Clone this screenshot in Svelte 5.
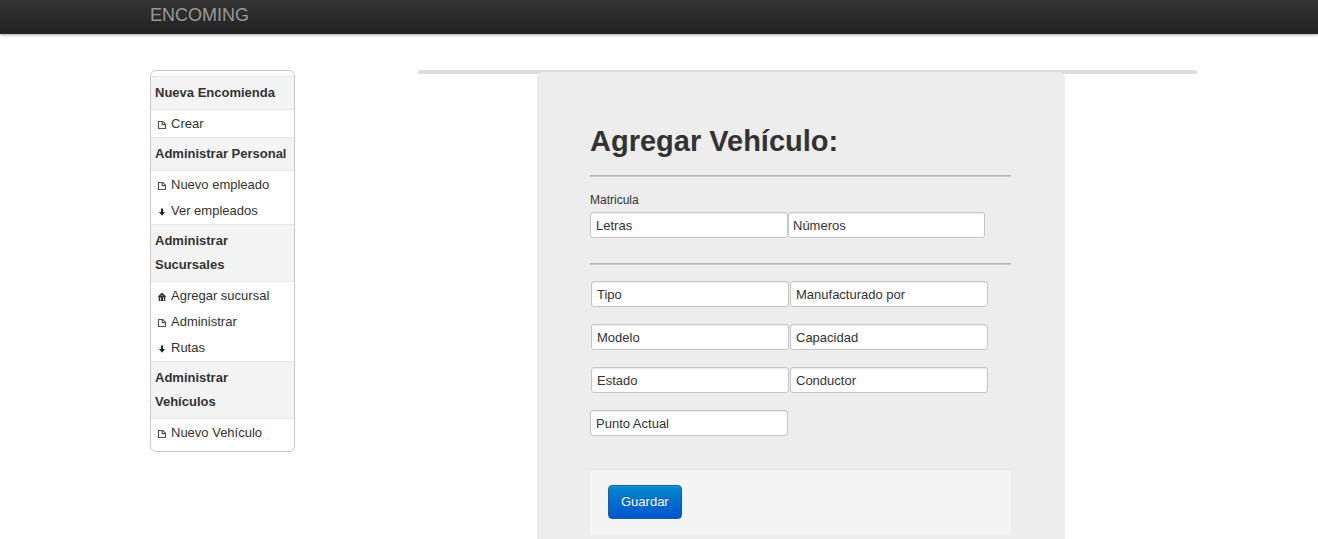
<script lang="ts">
  const sections = [
    { title: 'Nueva Encomienda', items: [{ icon: 'file', text: 'Crear' }] },
    {
      title: 'Administrar Personal',
      items: [
        { icon: 'file', text: 'Nuevo empleado' },
        { icon: 'arrow', text: 'Ver empleados' }
      ]
    },
    {
      title: 'Administrar Sucursales',
      items: [
        { icon: 'home', text: 'Agregar sucursal' },
        { icon: 'file', text: 'Administrar' },
        { icon: 'arrow', text: 'Rutas' }
      ]
    },
    { title: 'Administrar Vehículos', items: [{ icon: 'file', text: 'Nuevo Vehículo' }] }
  ];

  const details = ['Tipo', 'Manufacturado por', 'Modelo', 'Capacidad', 'Estado', 'Conductor'];
</script>

<header class="navbar"><a class="brand" href="#inicio">ENCOMING</a></header>

<div class="layout">
  <nav class="sidebar" aria-label="Menú">
    {#each sections as section}
      <h2>{section.title}</h2>
      <ul>
        {#each section.items as item}
          <li>
            <a href="#menu">
              <svg class="icon" viewBox="0 0 10 10" aria-hidden="true">
                {#if item.icon === 'file'}
                  <path d="M1.5 1.5h4.3l2.7 2.7v4.3h-7z" fill="#fff" stroke="#555" stroke-width="1.2" />
                  <path d="M5.2 1.5v3.2h3.3" fill="none" stroke="#555" stroke-width="1.2" />
                {:else if item.icon === 'arrow'}
                  <path d="M4 1.5h2v3.6h2L5 8.8 2 5.1h2z" fill="#222" />
                {:else}
                  <path d="M5 0.6L0.6 4.8h1.1v4.2h6.6V4.8h1.1z" fill="#333" />
                  <path d="M3 5.4h1v3H3zM6 5.4h1v3H6zM4.5 3h1v1h-1z" fill="#ddd" />
                {/if}
              </svg>
              {item.text}
            </a>
          </li>
        {/each}
      </ul>
    {/each}
  </nav>

  <main>
    <form class="card" onsubmit={(e) => e.preventDefault()}>
      <h1>Agregar Vehículo:</h1>
      <hr />
      <label for="letras">Matricula</label>
      <div class="plate">
        <input id="letras" type="text" placeholder="Letras" />
        <input type="text" placeholder="Números" aria-label="Números" />
      </div>
      <hr />
      <div class="details">
        {#each details as name}
          <input type="text" placeholder={name} aria-label={name} />
        {/each}
      </div>
      <div class="plate">
        <input type="text" placeholder="Punto Actual" aria-label="Punto Actual" />
      </div>
      <div class="actions"><button type="submit">Guardar</button></div>
    </form>
  </main>
</div>

<style>
  :global(body) {
    margin: 0;
    background: #fff;
    color: #333;
    font: 13px/20px "Liberation Sans", Arial, sans-serif;
  }
  .navbar {
    box-sizing: border-box;
    height: 34px;
    padding: 5px 150px;
    background: linear-gradient(#333, #222);
    box-shadow: 0 1px 3px rgba(0, 0, 0, 0.35);
  }
  .brand {
    display: block;
    color: #999;
    font-size: 18px;
    line-height: 20px;
    text-decoration: none;
  }
  .layout {
    display: flex;
    align-items: flex-start;
    gap: 123px;
    padding: 36px 121px 0 150px;
  }
  .sidebar {
    box-sizing: border-box;
    flex: none;
    width: 145px;
    padding: 5px 0;
    border: 1px solid #c8c8c8;
    border-radius: 6px;
  }
  h2 {
    margin: 0;
    padding: 4px;
    border: solid #e8e8e8;
    border-width: 1px 0;
    background: #f4f4f4;
    font-size: 13px;
    line-height: 24px;
  }
  ul {
    margin: 0;
    padding: 1px 0 0;
    list-style: none;
  }
  li a {
    display: flex;
    align-items: center;
    gap: 4px;
    height: 26px;
    padding-left: 6px;
    color: #333;
    text-decoration: none;
  }
  .icon {
    width: 10px;
    height: 10px;
    margin-top: 2px;
  }
  main {
    flex: 1;
    min-width: 0;
    background: linear-gradient(#ddd, #ddd) top / 100% 4px no-repeat;
    border-radius: 2px;
  }
  main::before {
    display: table;
    content: "";
  }
  .card {
    margin: 2px 132px 0 119px;
    padding: 49px 54px 4px 53px;
    border-radius: 6px 6px 0 0;
    background: #ededed;
  }
  h1 {
    margin: 0;
    font-size: 29px;
    line-height: 40px;
  }
  hr {
    height: 1px;
    margin: 14px 0 13px;
    border: 0;
    border-top: 1px solid #b5b5b5;
    background: #ccc;
  }
  label {
    display: block;
    margin-bottom: 2px;
    font-size: 12px;
  }
  .plate {
    display: grid;
    grid-template-columns: 198px 197px;
  }
  .plate + hr {
    margin: 25px 0 16px;
  }
  .details {
    display: grid;
    grid-template-columns: 198px 198px;
    gap: 17px 1px;
    margin: 16px 0 17px 1px;
  }
  input {
    box-sizing: border-box;
    width: 100%;
    min-width: 0;
    height: 26px;
    padding: 0 5px;
    border: 1px solid #c6c6c6;
    border-radius: 3px;
    background: #fff;
    box-shadow: inset 0 1px 1px rgba(0, 0, 0, 0.075);
    color: #333;
    font: inherit;
  }
  .plate input + input {
    padding-left: 4px;
  }
  input::placeholder {
    color: #333;
    opacity: 1;
  }
  .actions {
    margin-top: 33px;
    padding: 15px 18px 16px;
    border-top: 1px solid #e3e3e3;
    background: #f4f4f4;
  }
  button {
    display: block;
    height: 34px;
    padding: 0 12px;
    border: 1px solid #0a5fae;
    border-radius: 4px;
    background: linear-gradient(#0088cc, #0055cc);
    box-shadow: inset 0 1px 0 rgba(255, 255, 255, 0.15);
    color: #fff;
    font: inherit;
    text-shadow: 0 -1px 0 rgba(0, 0, 0, 0.25);
  }
</style>
